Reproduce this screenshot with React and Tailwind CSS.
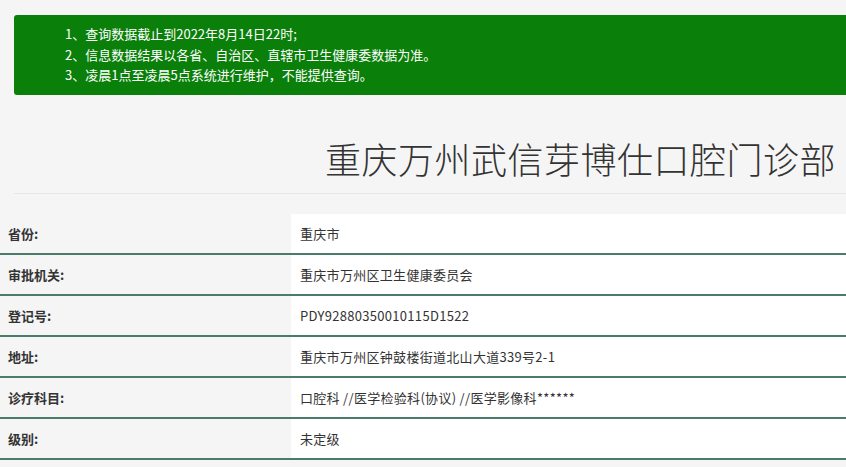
const rows = [
  ['省份:', '重庆市'],
  ['审批机关:', '重庆市万州区卫生健康委员会'],
  ['登记号:', 'PDY92880350010115D1522'],
  ['地址:', '重庆市万州区钟鼓楼街道北山大道339号2-1'],
  ['诊疗科目:', '口腔科 //医学检验科(协议) //医学影像科******'],
  ['级别:', '未定级'],
];

export default function App() {
  return (
    <div
      className="h-[467px] overflow-hidden bg-[#f5f5f5] text-[#333]"
      style={{ fontFamily: '"Noto Sans CJK SC", "Microsoft YaHei", sans-serif' }}
    >
      <div className="pl-[14px] pt-[15px]">
        <div className="h-[80px] rounded-l-[3px] bg-[#0a800a] pl-[51px] pt-[9px] text-[13px] leading-[20.5px] text-white">
          <p>1、查询数据截止到2022年8月14日22时;</p>
          <p>2、信息数据结果以各省、自治区、直辖市卫生健康委数据为准。</p>
          <p>3、凌晨1点至凌晨5点系统进行维护，不能提供查询。</p>
        </div>
      </div>
      <div className="ml-[14px] flex h-[99px] items-center justify-end border-b border-[#e6e6e6] pr-[10px] pt-[28px]">
        <h1 className="text-[36px] font-light leading-none tracking-[0.5px] text-[#333]">重庆万州武信芽博仕口腔门诊部</h1>
      </div>
      <div className="mt-[20px]">
        {rows.map(([k, v]) => (
          <div key={k} className="flex h-[41px] border-b-2 border-[#4b7b6a] text-[13px]">
            <div className="flex w-[291px] items-center pl-[8px] font-bold">{k}</div>
            <div className="flex flex-1 items-center bg-white pl-[9px] tracking-[0.3px]">{v}</div>
          </div>
        ))}
      </div>
    </div>
  );
}
